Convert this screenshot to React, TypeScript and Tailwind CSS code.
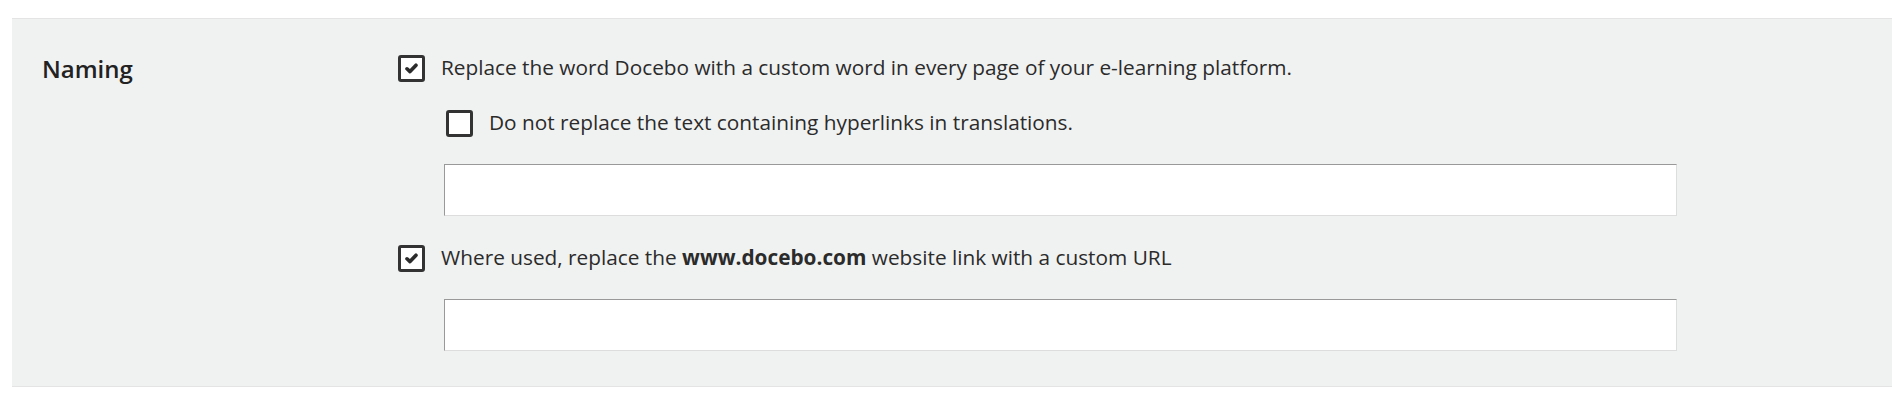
import React, { useState } from 'react';

const CheckBox: React.FC<{ checked: boolean; onToggle: () => void }> = ({ checked, onToggle }) => (
  <button
    type="button"
    onClick={onToggle}
    className="w-[27px] h-[27px] shrink-0 border-[3px] border-[#333] rounded-[3px] bg-white flex items-center justify-center"
  >
    {checked && (
      <svg width="13" height="11" viewBox="0 0 13 11">
        <path d="M2 5.8 L5 8.6 L11 2.2" fill="none" stroke="#2b2b2b" strokeWidth="3.6" strokeLinecap="round" strokeLinejoin="round" />
      </svg>
    )}
  </button>
);

const TextField: React.FC = () => (
  <input
    type="text"
    className="block w-[1233px] h-[52px] bg-white border border-t-[#999] border-l-[#999] border-r-[#ddd] border-b-[#ddd] outline-none px-3 text-[21px]"
  />
);

const App: React.FC = () => {
  const [replaceWord, setReplaceWord] = useState(true);
  const [skipLinks, setSkipLinks] = useState(false);
  const [replaceUrl, setReplaceUrl] = useState(true);

  return (
    <div className="w-[1898px] h-[406px] bg-white pt-[18px] font-['Open_Sans',sans-serif] text-[#2b2b2b]">
      <div className="ml-[12px] mr-[6px] bg-[#f0f2f1] border-t border-b border-[#e4e4e4] flex">
        <div className="w-[386px] pl-[30px] pt-[34px]">
          <h2 className="text-[24px] leading-[32px] font-semibold text-[#222]">Naming</h2>
        </div>

        <div className="pt-[35px] pb-[35px]">
          <div className="flex items-center h-[28px] gap-[16px]">
            <CheckBox checked={replaceWord} onToggle={() => setReplaceWord(!replaceWord)} />
            <span className="text-[20.8px] leading-[27px] pb-[2px]">
              Replace the word Docebo with a custom word in every page of your e-learning platform.
            </span>
          </div>

          <div className="flex items-center h-[28px] gap-[16px] mt-[27px] ml-[48px]">
            <CheckBox checked={skipLinks} onToggle={() => setSkipLinks(!skipLinks)} />
            <span className="text-[20.8px] leading-[27px] pb-[2px]">
              Do not replace the text containing hyperlinks in translations.
            </span>
          </div>

          <div className="mt-[27px] ml-[46px]">
            <TextField />
          </div>

          <div className="flex items-center h-[28px] gap-[16px] mt-[28px]">
            <CheckBox checked={replaceUrl} onToggle={() => setReplaceUrl(!replaceUrl)} />
            <span className="text-[20.8px] leading-[27px] pb-[2px]">
              Where used, replace the <b className="font-bold">www.docebo.com</b> website link with a custom URL
            </span>
          </div>

          <div className="mt-[27px] ml-[46px]">
            <TextField />
          </div>
        </div>
      </div>
    </div>
  );
};

export default App;
